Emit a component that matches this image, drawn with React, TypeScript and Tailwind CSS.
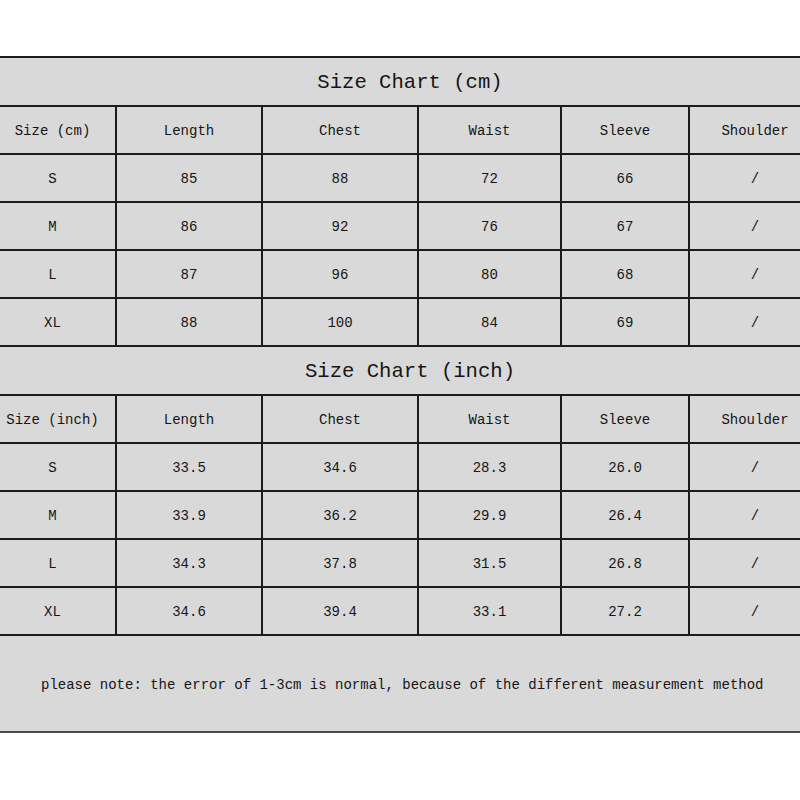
const cmRows = [
  ["S", "85", "88", "72", "66", "/"],
  ["M", "86", "92", "76", "67", "/"],
  ["L", "87", "96", "80", "68", "/"],
  ["XL", "88", "100", "84", "69", "/"],
];

const inchRows = [
  ["S", "33.5", "34.6", "28.3", "26.0", "/"],
  ["M", "33.9", "36.2", "29.9", "26.4", "/"],
  ["L", "34.3", "37.8", "31.5", "26.8", "/"],
  ["XL", "34.6", "39.4", "33.1", "27.2", "/"],
];

const cols = "grid grid-cols-[125px_146px_156px_143px_128px_132px]";

function Row({ cells }: { cells: string[] }) {
  return (
    <div className={`${cols} h-[48px] border-b-2 border-[#1c1c1c]`}>
      {cells.map((c, i) => (
        <div
          key={i}
          className={`flex items-center justify-center pt-[2px] ${i > 0 ? "border-l-2 border-[#1c1c1c]" : ""}`}
        >
          {c}
        </div>
      ))}
    </div>
  );
}

function Chart({ title, unit, rows }: { title: string; unit: string; rows: string[][] }) {
  return (
    <>
      <div className="h-[49px] flex items-center justify-center border-b-2 border-[#1c1c1c] text-[20.6px] pl-[10px] pt-[4px]">
        {title}
      </div>
      <Row cells={[`Size (${unit})`, "Length", "Chest", "Waist", "Sleeve", "Shoulder"]} />
      {rows.map((r, i) => (
        <Row key={i} cells={r} />
      ))}
    </>
  );
}

export default function App() {
  return (
    <div className="w-[800px] h-[800px] overflow-hidden bg-white font-['Liberation_Mono',monospace] text-[14px] text-[#151515]">
      <div className="h-[56px]" />
      <div className="w-[830px] -ml-[10px] bg-[#d9d9d9] border-t-2 border-[#1c1c1c]">
        <Chart title="Size Chart (cm)" unit="cm" rows={cmRows} />
        <Chart title="Size Chart (inch)" unit="inch" rows={inchRows} />
        <div className="h-[97px] flex items-center pl-[51px] pt-[4px] border-b-2 border-[#4a4a4a]">
          please note: the error of 1-3cm is normal, because of the different measurement method
        </div>
      </div>
    </div>
  );
}
